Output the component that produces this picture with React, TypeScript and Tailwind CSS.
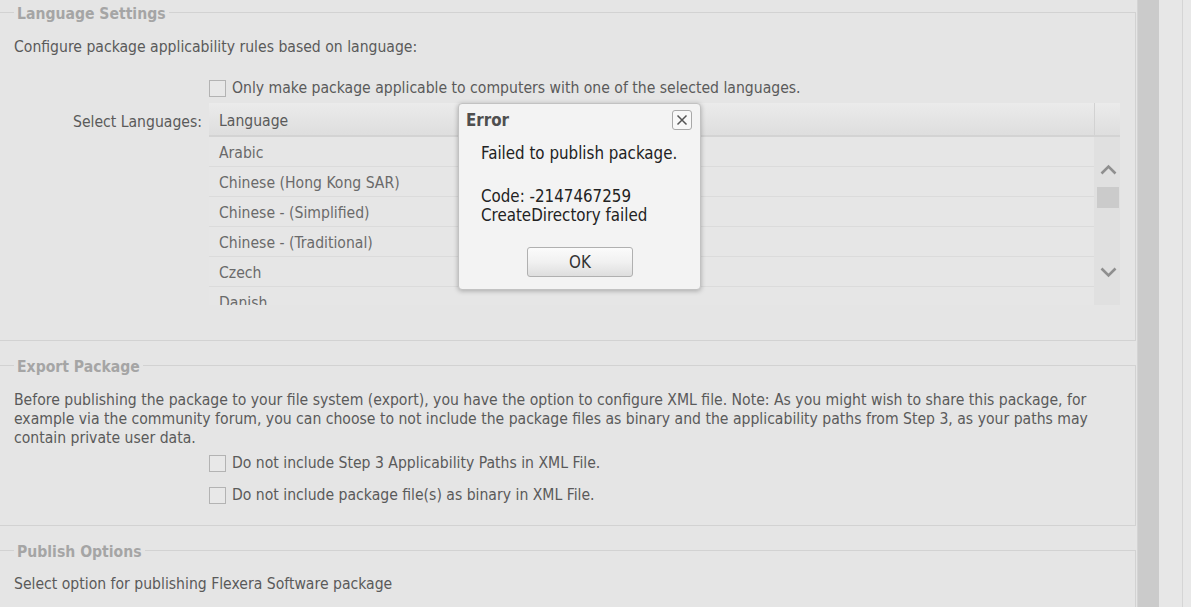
import React from "react";

function CheckBox() {
  return (
    <span className="inline-block w-[17px] h-[17px] shrink-0 border border-[#b3b3b3] bg-[#e8e8e8]" />
  );
}

function Chevron({ up }: { up?: boolean }) {
  return (
    <svg width="17" height="11" viewBox="0 0 17 11" className="block">
      <polyline
        points={up ? "1.5,9.5 8.5,2.5 15.5,9.5" : "1.5,1.5 8.5,8.5 15.5,1.5"}
        fill="none"
        stroke="#8f8f8f"
        strokeWidth="2.6"
      />
    </svg>
  );
}

const languages = [
  "Arabic",
  "Chinese (Hong Kong SAR)",
  "Chinese - (Simplified)",
  "Chinese - (Traditional)",
  "Czech",
  "Danish",
  "Dutch",
];

export default function App() {
  return (
    <div className="relative w-[1191px] h-[607px] overflow-hidden bg-[#e5e5e5] flex font-['DejaVu_Sans_Condensed','DejaVu_Sans',sans-serif] text-[15.6px] leading-[19px] text-[#5a5a5a]">
      <div className="w-[1138px] shrink-0 border-r border-[#d4d4d4] pr-[1px] flex flex-col">
        {/* Language settings */}
        <fieldset className="m-0 min-w-0 border border-l-0 border-[#d2d2d2] px-[14px] pt-[14px] pb-[35px]">
          <legend className="px-[3px] pt-[4px] text-[15.6px] leading-[20px] font-bold text-[#a5a5a5]">
            Language Settings
          </legend>
          <p className="whitespace-nowrap">Configure package applicability rules based on language:</p>
          <div className="mt-[22px] ml-[195px] h-[19px] flex items-center gap-[6px]">
            <CheckBox />
            <span className="whitespace-nowrap">
              Only make package applicable to computers with one of the selected languages.
            </span>
          </div>
          <div className="mt-[5px] flex">
            <div className="w-[188px] pt-[10px] text-right whitespace-nowrap">Select Languages:</div>
            <div className="ml-[7px] w-[911px] h-[202px] overflow-hidden flex flex-col">
              <div className="h-[34px] shrink-0 flex border-b-2 border-[#d3d3d3] bg-gradient-to-b from-[#ebebeb] to-[#dedede]">
                <div className="flex-1 pl-[10px] pt-[4px] flex items-center">Language</div>
                <div className="w-[26px] border-l border-[#d2d2d2]" />
              </div>
              <div className="flex flex-1 min-h-0">
                <div className="flex-1 overflow-hidden text-[#6a6a6a]">
                  {languages.map((l) => (
                    <div
                      key={l}
                      className="h-[30px] pl-[10px] pt-[4px] flex items-center border-b border-[#dbdbdb] bg-[#e6e6e6] whitespace-nowrap"
                    >
                      {l}
                    </div>
                  ))}
                </div>
                <div className="w-[26px] shrink-0 bg-[#e0e0e0] flex flex-col items-start pl-[3px]">
                  <div className="mt-[27px] ml-[3px]">
                    <Chevron up />
                  </div>
                  <div className="mt-[12px] w-[22px] h-[21px] bg-[#cbcbcb]" />
                  <div className="mt-[59px] ml-[3px]">
                    <Chevron />
                  </div>
                </div>
              </div>
            </div>
          </div>
        </fieldset>

        {/* Export package */}
        <fieldset className="mt-[12px] m-0 min-w-0 border border-l-0 border-[#d2d2d2] px-[14px] pt-[14px] pb-[20px]">
          <legend className="px-[3px] pt-[4px] text-[15.6px] leading-[20px] font-bold text-[#a5a5a5]">
            Export Package
          </legend>
          <p className="whitespace-nowrap">
            Before publishing the package to your file system (export), you have the option to configure XML file. Note: As you might wish to share this package, for
            <br />
            example via the community forum, you can choose to not include the package files as binary and the applicability paths from Step 3, as your paths may
            <br />
            contain private user data.
          </p>
          <div className="mt-[6px] ml-[195px] h-[19px] flex items-center gap-[6px]">
            <CheckBox />
            <span className="whitespace-nowrap">Do not include Step 3 Applicability Paths in XML File.</span>
          </div>
          <div className="mt-[13px] ml-[195px] h-[19px] flex items-center gap-[6px]">
            <CheckBox />
            <span className="whitespace-nowrap">Do not include package file(s) as binary in XML File.</span>
          </div>
        </fieldset>

        {/* Publish options */}
        <fieldset className="mt-[12px] m-0 min-w-0 flex-1 border border-l-0 border-[#d2d2d2] px-[14px] pt-[13px] pb-[21px]">
          <legend className="px-[3px] pt-[4px] text-[15.6px] leading-[20px] font-bold text-[#a5a5a5]">
            Publish Options
          </legend>
          <p className="whitespace-nowrap">Select option for publishing Flexera Software package</p>
        </fieldset>
      </div>

      {/* page scrollbar and side gutter */}
      <div className="w-[21px] shrink-0 bg-[#cbcbcb]" />
      <div className="w-[24px] shrink-0 bg-[#e7e7e7] border-r border-[#d5d5d5]" />
      <div className="flex-1 bg-[#e8e8e8]" />

      {/* error dialog */}
      <div className="absolute left-[458px] top-[103px] w-[243px] h-[187px] rounded-[4px] border border-[#c2c2c2] bg-[#f3f3f3] shadow-[0_1px_5px_rgba(0,0,0,0.28)] text-[#222222] text-[16.8px] leading-[19px]">
        <div className="h-[26px] flex items-start justify-between pl-[7px] pr-[8px] pt-[6px]">
          <span className="text-[16.8px] leading-[20px] font-bold text-[#4f4f4f]">Error</span>
          <span className="w-[20px] h-[20px] rounded-[3px] border border-[#a8a8a8] bg-[#f8f8f8] flex items-center justify-center">
            <svg width="12" height="12" viewBox="0 0 12 12">
              <path d="M1.5 1.5 L10.5 10.5 M10.5 1.5 L1.5 10.5" stroke="#555555" strokeWidth="1.5" fill="none" />
            </svg>
          </span>
        </div>
        <div className="pl-[22px] pt-[14px]">
          <p>Failed to publish package.</p>
          <p className="mt-[24px]">Code: -2147467259</p>
          <p>CreateDirectory failed</p>
        </div>
        <div className="mt-[22px] ml-[68px] w-[106px] h-[30px] rounded-[3px] border border-[#b0b0b0] bg-gradient-to-b from-[#fbfbfb] via-[#f1f1f1] to-[#dedede] flex items-center justify-center text-[#333333]">
          OK
        </div>
      </div>
    </div>
  );
}
